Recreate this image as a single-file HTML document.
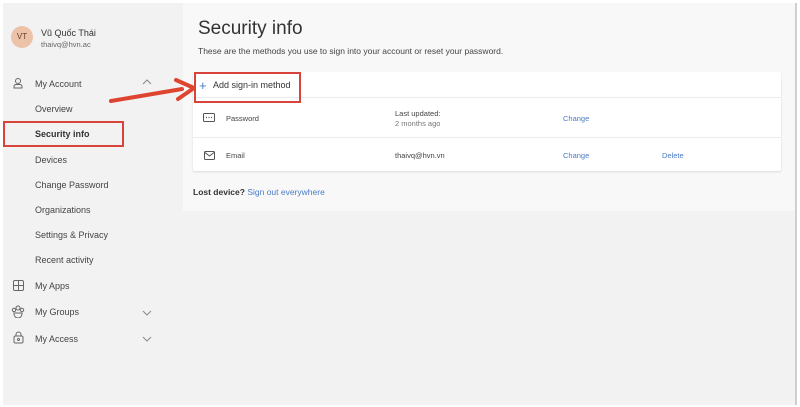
<!DOCTYPE html>
<html><head><style>
*{margin:0;padding:0;box-sizing:border-box}
body{width:800px;height:407px;background:#fff;font-family:"Liberation Sans","Noto Sans CJK SC",sans-serif;position:relative;overflow:hidden;color:#333}
.abs{position:absolute}
#bg{left:3px;top:3px;width:794px;height:402px;background:#f2f2f2}
#main{left:183px;top:3px;width:613px;height:208px;background:#f8f8f8}
#edge{left:795px;top:3px;width:2px;height:402px;background:#cfcfcf}
.t{position:absolute;font-size:9px;color:#444;white-space:nowrap}
.blue{color:#4a7bc8}
#card{left:193px;top:72px;width:588px;height:99px;background:#fff;box-shadow:0 1px 2px rgba(0,0,0,.12);border-radius:2px}
.line{position:absolute;left:0;right:0;height:1px;background:#ececec}
.red{position:absolute;border:2px solid #d9443a}
</style></head><body>
<div class="abs" id="bg"></div>
<div class="abs" id="main"></div>
<div class="abs" id="edge"></div>
<div class="abs" style="left:11px;top:26px;width:22px;height:22px;border-radius:50%;background:#ecc3a8;font-size:8px;color:#6b3e2a;text-align:center;line-height:22px">VT</div>
<div class="t" style="left:41px;top:28px;font-size:9px;color:#333">Vũ Quốc Thái</div>
<div class="t" style="left:41px;top:40px;font-size:7.5px;color:#666">thaivq@hvn.ac</div>
<svg class="abs" style="left:12px;top:77px" width="12" height="12" viewBox="0 0 12 12" fill="none" stroke="#666" stroke-width="1"><circle cx="6" cy="4" r="2.5"/><path d="M2 11v-1.5a2 2 0 0 1 2-2h4a2 2 0 0 1 2 2V11z"/></svg>
<div class="t" style="left:35px;top:79px">My Account</div>
<svg class="abs" style="left:142px;top:78px" width="10" height="8"><path d="M1 6l4-4 4 4" fill="none" stroke="#888"/></svg>
<div class="t" style="left:35px;top:104px">Overview</div>
<div class="t" style="left:35px;top:129px;font-weight:bold;color:#333">Security info</div>
<div class="red" style="left:3px;top:121px;width:121px;height:26px"></div>
<div class="t" style="left:35px;top:155px">Devices</div>
<div class="t" style="left:35px;top:180px">Change Password</div>
<div class="t" style="left:35px;top:205px">Organizations</div>
<div class="t" style="left:35px;top:230px">Settings &amp; Privacy</div>
<div class="t" style="left:35px;top:255px">Recent activity</div>
<svg class="abs" style="left:13px;top:280px" width="11" height="11" fill="none" stroke="#666"><rect x=".5" y=".5" width="10" height="10" rx="1.5"/><path d="M5.5 0v11M0 5.5h11"/></svg>
<div class="t" style="left:35px;top:281px">My Apps</div>
<svg class="abs" style="left:11px;top:305px" width="14" height="13" fill="none" stroke="#666"><circle cx="7" cy="3" r="2"/><circle cx="3" cy="5" r="1.7"/><circle cx="11" cy="5" r="1.7"/><path d="M3 8h8v1a3 3 0 0 1-8 0z"/></svg>
<div class="t" style="left:35px;top:307px">My Groups</div>
<svg class="abs" style="left:142px;top:309px" width="10" height="8"><path d="M1 2l4 4 4-4" fill="none" stroke="#888"/></svg>
<svg class="abs" style="left:13px;top:331px" width="11" height="13" fill="none" stroke="#666"><path d="M3 5V3.5a2.5 2.5 0 0 1 5 0V5"/><rect x="1" y="5" width="9" height="7" rx="1.5"/><circle cx="5.5" cy="8.5" r="1"/></svg>
<div class="t" style="left:35px;top:334px">My Access</div>
<svg class="abs" style="left:142px;top:335px" width="10" height="8"><path d="M1 2l4 4 4-4" fill="none" stroke="#888"/></svg>

<div class="t" style="left:198px;top:18px;font-size:19px;color:#333">Security info</div>
<div class="t" style="left:198px;top:46px;font-size:8.5px;color:#444">These are the methods you use to sign into your account or reset your password.</div>
<div class="abs" id="card">
 <div class="line" style="top:25px"></div>
 <div class="line" style="top:65px"></div>
</div>
<div class="t" style="left:199px;top:78px;font-size:13px;color:#4a7bc8;font-weight:300">+</div>
<div class="t" style="left:213px;top:80px;font-size:9px;color:#333">Add sign-in method</div>
<div class="red" style="left:194px;top:72px;width:107px;height:31px"></div>
<svg class="abs" style="left:203px;top:113px" width="12" height="9" fill="none" stroke="#555"><rect x=".5" y=".5" width="11" height="8" rx="1"/><path d="M3 4.5h1M5.5 4.5h1M8 4.5h1" stroke-width="1.2"/></svg>
<div class="t" style="left:226px;top:114px;font-size:7.5px">Password</div>
<div class="t" style="left:395px;top:109px;font-size:7.5px">Last updated:</div>
<div class="t" style="left:395px;top:119px;font-size:7.5px;color:#777">2 months ago</div>
<div class="t blue" style="left:563px;top:114px;font-size:7.5px">Change</div>
<svg class="abs" style="left:204px;top:151px" width="11" height="9" fill="none" stroke="#555"><rect x=".5" y=".5" width="10" height="8" rx="1"/><path d="M1 1.5l4.5 3.5 4.5-3.5"/></svg>
<div class="t" style="left:226px;top:151px;font-size:7.5px">Email</div>
<div class="t" style="left:395px;top:151px;font-size:7.5px">thaivq@hvn.vn</div>
<div class="t blue" style="left:563px;top:151px;font-size:7.5px">Change</div>
<div class="t blue" style="left:662px;top:151px;font-size:7.5px">Delete</div>
<div class="t" style="left:193px;top:187px;font-size:8.5px;font-weight:bold;color:#333">Lost device? <span class="blue" style="font-weight:normal">Sign out everywhere</span></div>
<svg class="abs" style="left:0;top:0" width="800" height="407"><path d="M111 101L182 89" stroke="#de4530" stroke-width="4" stroke-linecap="round"/><path d="M176 80L194 88L178 99" fill="none" stroke="#de4530" stroke-width="4" stroke-linecap="round" stroke-linejoin="round"/></svg>
</body></html>
